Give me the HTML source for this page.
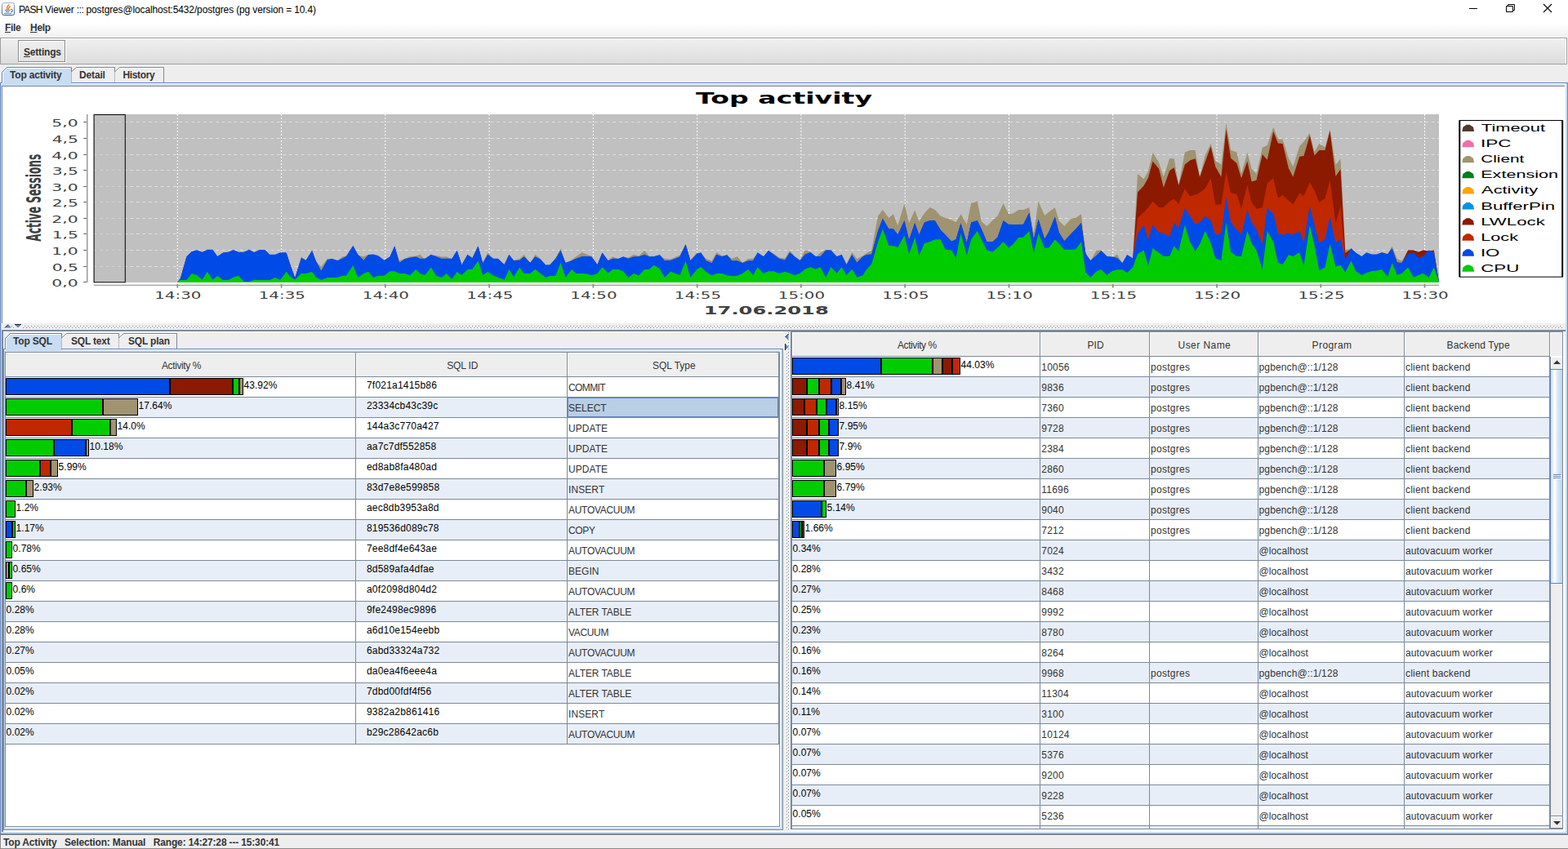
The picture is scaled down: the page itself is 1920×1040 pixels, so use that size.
<!DOCTYPE html><html lang="en"><head><meta charset="utf-8"><title>PASH Viewer</title><style>*{box-sizing:border-box;margin:0;padding:0}
html,body{width:1920px;height:1040px;overflow:hidden;background:#eee;font-family:"Liberation Sans",sans-serif;font-size:12px;color:#333}
body{position:relative}
div,span,i,svg{position:absolute;display:block}
span{white-space:nowrap;line-height:14px;height:14px}
u{text-decoration:underline;text-underline-offset:1px}
.b{font-weight:bold;color:#333}
.k{color:#000}
.c{color:#333}
.bar{height:21px;border:1px solid #000}
.th{background:#eee;color:#333;box-shadow:inset 1px 1px 0 #fff}
#chartwrap{left:3px;top:106px;width:1913px;height:290px;background:#fff;overflow:hidden}
#chartwrap svg{left:0;top:0}
.s{position:static;display:inline;line-height:inherit;height:auto}
</style></head><body>
<div style="left:0px;top:0px;width:1920px;height:23px;background:#fff"></div>
<svg style="left:2px;top:3px" width="16" height="16" viewBox="0 0 16 16"><defs><linearGradient id="jb" x1="0" y1="0" x2="0" y2="1"><stop offset="0" stop-color="#a3b4cd"/><stop offset="1" stop-color="#2f5a80"/></linearGradient></defs><rect x="0.5" y="0.5" width="15" height="15" rx="2" fill="#f7f7f7" stroke="url(#jb)"/><path d="M9.500 2.500C7 4.500 6 6 6.700 8.500M10.600 4.800C8.800 6 8 7.200 8.300 8.600" fill="none" stroke="#e8740c" stroke-width="1.300"/><path d="M4 9.500H10.500M5 11.500H9.500M11.300 8.300c2.500.3 2.800 3 0 3.600" fill="none" stroke="#4a6fa5" stroke-width="1.100"/><path d="M3 13.500H12" fill="none" stroke="#6f8db8" stroke-width="1"/></svg>
<span class="t0" style="left:23px;top:5px;letter-spacing:-0.14px;color:#000"><span class="s" style="letter-spacing:-0.75px">PASH</span> Viewer <span class="s" style="letter-spacing:-0.5px">:::</span> postgres@localhost:5432/postgres (pg version = 10.4)</span>
<svg style="left:1790px;top:0" width="130" height="23" viewBox="0 0 130 23"><path d="M9 10.500h10" stroke="#000" fill="none"/><path d="M54.500 7.500h8v7h-8zM56.500 7.500v-2h8v7h-2" stroke="#000" fill="none"/><path d="M100 5l10 10M110 5l-10 10" stroke="#000" fill="none" stroke-width="1.100"/></svg>
<div style="left:0px;top:23px;width:1920px;height:23px;background:linear-gradient(#fff 0%,#fff 25%,#f0f0f0 100%)"></div>
<span class="b" style="left:6px;top:27px;letter-spacing:-0.3px"><u>F</u>ile</span>
<span class="b" style="left:37px;top:27px;letter-spacing:-0.3px"><u>H</u>elp</span>
<div style="left:0px;top:46px;width:1919px;height:33px;background:linear-gradient(#f0f0f0,#dcdcdc);border:1px solid #a0a0a0;box-shadow:inset 0 1px 0 #fff, inset -1px 0 0 #fff"></div>
<div style="left:22px;top:49px;width:58px;height:27px;background:linear-gradient(#efefef,#e2e2e2);border:1px solid #8c8c8c;box-shadow:1px 1px 0 #fff, inset 1px 1px 0 #fff"></div>
<span class="b" style="left:29px;top:57px;letter-spacing:-0.19px"><u>S</u>ettings</span>
<div style="left:0px;top:101px;width:1920px;height:296px;background:#c8ddf2;border-left:1px solid #6382bf;border-top:1px solid #6382bf;border-right:1px solid #7a8a99"></div>
<div style="left:1px;top:102px;width:1916px;height:1px;background:#fff"></div>
<div style="left:1916px;top:102px;width:1px;height:294px;background:#fff"></div>
<div style="left:2px;top:105px;width:1914px;height:291px;background:#fff;border-left:1px solid #7a8a99;border-top:1px solid #7a8a99"></div>
<svg style="left:0px;top:80px" width="210" height="26" viewBox="0 80 210 26"><path d="M2.5 105V88.5L8.5 82.5H87.5V105z" fill="#c8ddf2"/><path d="M3.5 102V89L9 83.5H86.5" fill="none" stroke="#fff"/><path d="M2.5 101.5V88.5L8.5 82.5H87.5V101.5" fill="none" stroke="#6382bf"/><path d="M87.5 101V88L93.5 82.5H140.5V101z" fill="#eee"/><path d="M88.5 88.5L94 83.5H139.5" fill="none" stroke="#fff" stroke-opacity=".8"/><path d="M87.5 88L93.5 82.5H140.5V101" fill="none" stroke="#7a8a99"/><path d="M140.5 101V88L146.5 82.5H200.5V101z" fill="#eee"/><path d="M141.5 88.5L147 83.5H199.5" fill="none" stroke="#fff" stroke-opacity=".8"/><path d="M140.5 88L146.5 82.5H200.5V101" fill="none" stroke="#7a8a99"/></svg>
<span class="b" style="left:12px;top:85px;letter-spacing:-0.19px">Top activity</span>
<span class="b" style="left:97px;top:85px;letter-spacing:-0.15px">Detail</span>
<span class="b" style="left:150.4px;top:85px;letter-spacing:-0.33px">History</span>
<div id="chartwrap"><svg width="1913" height="290" viewBox="3 106 1913 290"><rect x="3" y="106" width="1913" height="290" fill="#fff"/><text transform="translate(852.09 126.75) scale(1.6593 1)" font-family="'DejaVu Sans', 'Liberation Sans', sans-serif" font-size="20" font-weight="bold" fill="#000">Top activity</text><rect x="114.6" y="140" width="1647.4" height="206" fill="#c0c0c0"/><path d="M217.3 140V346M344.6 140V346M471.8 140V346M599.1 140V346M726.4 140V346M853.7 140V346M980.9 140V346M1108.2 140V346M1235.5 140V346M1362.7 140V346M1490.0 140V346M1617.3 140V346M1744.5 140V346" stroke="#fff" stroke-width="1" stroke-dasharray="2 2" fill="none"/><path d="M114.6 326.5H1762M114.6 306.5H1762M114.6 286.5H1762M114.6 267.5H1762M114.6 247.5H1762M114.6 228.5H1762M114.6 208.5H1762M114.6 189.5H1762M114.6 169.5H1762M114.6 149.5H1762" stroke="#fff" stroke-opacity="0.5" stroke-width="1" stroke-dasharray="3.740 3.740" fill="none"/><path d="M217.3 346.0L217.3 345.4L220.8 341.9L228.5 313.8L234.8 308.8L241.2 307.1L247.6 309.6L253.8 306.7L260.4 306.7L266.3 314.9L273.3 310.1L279.3 309.6L285.8 307.0L292.1 309.6L298.4 309.6L305.0 306.7L311.2 309.9L317.5 306.9L324.5 306.9L330.2 312.7L337.1 312.7L343.0 310.1L350.6 310.1L355.8 325.9L361.2 340.9L369.0 314.6L374.6 319.6L382.1 307.6L386.7 320.1L393.3 326.7L400.8 317.1L406.2 317.7L413.3 319.9L418.3 315.0L424.2 312.9L432.3 301.7L438.3 312.7L445.4 314.2L451.0 311.7L457.1 312.4L463.3 314.2L470.4 319.6L477.5 315.1L483.2 302.1L489.0 319.2L495.8 316.7L501.7 314.2L509.2 313.8L514.2 311.8L520.4 317.7L527.9 312.7L534.2 312.9L540.8 314.6L546.7 314.2L553.3 317.7L559.6 307.6L565.4 325.1L572.5 312.7L578.5 315.0L585.4 302.1L591.2 321.7L597.3 309.2L604.2 317.7L610.0 317.7L617.5 323.3L623.3 312.7L629.2 318.8L636.2 317.1L641.7 312.1L649.2 322.6L655.4 311.8L661.7 316.7L668.3 325.5L673.3 325.2L680.4 315.8L686.5 304.2L692.5 322.7L700.0 318.3L705.4 314.2L712.7 309.2L719.2 312.1L724.3 313.8L731.5 323.8L737.5 310.1L744.6 318.8L750.4 314.2L757.5 317.7L763.3 315.1L769.3 315.4L776.2 311.8L782.1 313.8L789.2 306.8L795.0 313.8L800.8 313.8L807.9 313.0L813.8 316.7L821.2 317.5L826.7 315.0L832.5 312.5L839.6 298.8L845.4 318.8L853.3 309.6L858.3 310.1L864.6 317.1L871.7 319.6L877.3 309.2L884.2 313.3L890.2 313.0L896.2 316.7L902.9 314.2L909.2 321.7L916.2 317.1L922.1 316.7L927.7 310.2L935.0 313.8L941.0 307.6L947.5 310.8L954.2 315.4L961.2 316.5L967.1 306.9L973.3 314.0L979.6 318.6L985.8 306.5L992.5 308.6L998.8 314.9L1004.6 309.4L1011.2 306.1L1017.5 306.1L1024.6 314.9L1030.7 311.5L1036.5 323.6L1043.3 309.0L1049.3 316.9L1056.7 313.2L1060.0 310.8L1067.3 306.6L1075.1 264.4L1080.8 257.1L1088.3 267.0L1093.9 262.3L1099.4 276.4L1107.4 249.3L1113.1 273.2L1120.2 257.4L1125.4 271.2L1131.9 261.3L1138.6 254.0L1144.9 257.1L1151.7 264.4L1157.4 267.0L1165.2 269.6L1170.6 272.2L1176.5 262.3L1183.8 274.8L1189.2 249.1L1196.7 246.4L1201.7 271.2L1208.4 276.9L1215.4 270.1L1221.5 264.4L1228.5 249.3L1235.0 262.0L1240.0 261.8L1247.3 257.1L1253.0 257.1L1260.3 254.3L1265.8 286.3L1271.5 246.7L1279.1 264.1L1284.3 259.7L1291.8 254.3L1296.8 270.6L1303.3 276.9L1311.9 267.5L1317.1 267.0L1323.9 262.3L1329.4 309.7L1335.3 320.0L1342.6 306.6L1348.3 306.6L1355.4 313.4L1361.9 315.3L1368.1 311.8L1374.4 322.9L1380.1 312.9L1387.1 317.1L1393.0 213.0L1400.6 219.3L1406.0 209.9L1411.5 187.0L1419.1 199.0L1424.8 216.7L1432.1 194.3L1437.6 194.3L1443.3 226.6L1450.8 186.5L1457.1 183.9L1463.6 183.9L1469.1 216.7L1475.6 190.6L1482.6 176.0L1488.3 196.9L1495.4 201.6L1501.4 150.5L1507.1 183.9L1514.4 186.5L1520.0 212.5L1527.4 187.0L1532.6 206.8L1538.5 213.0L1545.8 180.7L1551.7 178.1L1559.2 155.7L1564.9 170.3L1570.6 170.8L1577.9 193.8L1583.4 204.2L1591.2 179.2L1596.5 173.4L1603.8 163.0L1609.5 185.9L1615.4 176.0L1622.5 180.2L1628.5 158.1L1635.5 202.1L1641.5 194.6L1647.3 306.1L1654.3 304.9L1660.5 310.6L1667.5 314.8L1673.2 310.1L1679.8 312.5L1685.5 312.5L1692.1 308.7L1699.1 310.8L1704.6 301.4L1710.8 317.0L1716.6 319.6L1724.1 306.6L1730.8 306.6L1737.1 308.7L1742.3 306.6L1749.6 307.5L1755.8 306.4L1761.9 345.4L1761.9 346.0Z" fill="#9f9371"/><path d="M217.3 346.0L217.3 345.4L220.8 341.9L228.5 315.2L234.8 308.8L241.2 307.1L247.6 309.6L253.8 306.7L260.4 306.7L266.3 314.9L273.3 310.1L279.3 309.6L285.8 307.0L292.1 309.6L298.4 309.6L305.0 306.7L311.2 309.9L317.5 306.9L324.5 306.9L330.2 312.7L337.1 312.7L343.0 310.1L350.6 310.1L355.8 325.9L361.2 340.9L369.0 316.7L374.6 319.6L382.1 307.6L386.7 320.1L393.3 332.6L400.8 319.2L406.2 317.7L413.3 319.9L418.3 318.0L424.2 314.6L432.3 301.7L438.3 312.7L445.4 319.6L451.0 313.0L457.1 312.4L463.3 314.2L470.4 319.6L477.5 315.1L483.2 302.1L489.0 322.6L495.8 318.0L501.7 316.7L509.2 315.1L514.2 317.6L520.4 317.7L527.9 312.7L534.2 315.1L540.8 317.6L546.7 317.6L553.3 317.7L559.6 307.6L565.4 325.1L572.5 312.7L578.5 317.1L585.4 302.1L591.2 323.0L597.3 312.7L604.2 317.7L610.0 317.7L617.5 325.1L623.3 312.7L629.2 320.1L636.2 319.6L641.7 315.1L649.2 322.6L655.4 315.1L661.7 318.4L668.3 325.5L673.3 325.2L680.4 317.6L686.5 307.6L692.5 322.7L700.0 320.1L705.4 317.6L712.7 314.9L719.2 314.9L724.3 315.1L731.5 325.1L737.5 310.1L744.6 320.1L750.4 317.7L757.5 317.7L763.3 315.1L769.3 317.7L776.2 315.1L782.1 315.1L789.2 312.7L795.0 315.1L800.8 315.1L807.9 313.0L813.8 320.1L821.2 319.6L826.7 317.6L832.5 315.1L839.6 300.1L845.4 320.1L853.3 311.7L858.3 310.1L864.6 320.1L871.7 323.0L877.3 312.7L884.2 315.1L890.2 313.0L896.2 320.1L902.9 320.1L909.2 323.0L916.2 320.1L922.1 320.1L927.7 310.2L935.0 315.1L941.0 307.6L947.5 312.6L954.2 317.6L961.2 319.5L967.1 309.9L973.3 315.3L979.6 319.9L985.8 312.4L992.5 309.9L998.8 314.9L1004.6 314.9L1011.2 307.4L1017.5 307.4L1024.6 314.9L1030.7 312.8L1036.5 324.9L1043.3 312.8L1049.3 322.4L1056.7 314.9L1060.0 313.2L1067.3 312.2L1075.1 283.5L1080.8 268.4L1088.3 280.9L1093.9 281.2L1099.4 288.2L1107.4 271.0L1113.1 294.5L1120.2 273.6L1125.4 288.2L1131.9 273.1L1138.6 271.0L1144.9 271.0L1151.7 282.5L1157.4 288.2L1165.2 296.5L1170.6 293.9L1176.5 273.9L1183.8 298.1L1189.2 273.1L1196.7 270.8L1201.7 280.9L1208.4 296.9L1215.4 296.9L1221.5 291.3L1228.5 271.0L1235.0 275.7L1240.0 276.0L1247.3 276.0L1253.0 275.7L1260.3 261.1L1265.8 293.9L1271.5 268.9L1279.1 293.4L1284.3 284.6L1291.8 266.3L1296.8 285.6L1303.3 296.0L1311.9 286.6L1317.1 281.4L1323.9 273.6L1329.4 311.6L1335.3 320.0L1342.6 313.7L1348.3 308.0L1355.4 314.8L1361.9 315.3L1368.1 316.9L1374.4 322.9L1380.1 312.9L1387.1 317.1L1393.0 235.4L1400.6 227.6L1406.0 217.7L1411.5 197.4L1419.1 206.8L1424.8 229.7L1432.1 208.9L1437.6 205.2L1443.3 227.1L1450.8 201.6L1457.1 196.4L1463.6 194.3L1469.1 216.7L1475.6 198.4L1482.6 179.2L1488.3 204.2L1495.4 216.7L1501.4 158.3L1507.1 193.8L1514.4 200.0L1520.0 218.2L1527.4 197.4L1532.6 222.4L1538.5 220.8L1545.8 189.1L1551.7 195.8L1559.2 160.9L1564.9 175.5L1570.6 176.0L1577.9 206.2L1583.4 216.7L1591.2 191.7L1596.5 191.1L1603.8 166.1L1609.5 190.6L1615.4 183.9L1622.5 183.9L1628.5 160.4L1635.5 216.1L1641.5 207.3L1647.3 309.7L1654.3 304.9L1660.5 310.6L1667.5 314.8L1673.2 310.1L1679.8 312.5L1685.5 312.5L1692.1 310.1L1699.1 312.2L1704.6 304.9L1710.8 321.2L1716.6 322.6L1724.1 306.6L1730.8 306.6L1737.1 308.7L1742.3 306.6L1749.6 307.5L1755.8 306.4L1761.9 345.4L1761.9 346.0Z" fill="#8b1a00"/><path d="M217.3 346.0L217.3 345.4L220.8 341.9L228.5 315.2L234.8 308.8L241.2 307.1L247.6 309.6L253.8 306.7L260.4 306.7L266.3 314.9L273.3 310.1L279.3 309.6L285.8 307.0L292.1 309.6L298.4 309.6L305.0 306.7L311.2 309.9L317.5 306.9L324.5 306.9L330.2 312.7L337.1 312.7L343.0 310.1L350.6 310.1L355.8 325.9L361.2 340.9L369.0 316.7L374.6 319.6L382.1 307.6L386.7 320.1L393.3 332.6L400.8 319.2L406.2 317.7L413.3 319.9L418.3 318.0L424.2 314.6L432.3 301.7L438.3 312.7L445.4 319.6L451.0 313.0L457.1 312.4L463.3 314.2L470.4 319.6L477.5 315.1L483.2 302.1L489.0 322.6L495.8 318.0L501.7 316.7L509.2 315.1L514.2 317.6L520.4 317.7L527.9 312.7L534.2 315.1L540.8 317.6L546.7 317.6L553.3 317.7L559.6 307.6L565.4 325.1L572.5 312.7L578.5 317.1L585.4 302.1L591.2 323.0L597.3 312.7L604.2 317.7L610.0 317.7L617.5 325.1L623.3 312.7L629.2 320.1L636.2 319.6L641.7 315.1L649.2 322.6L655.4 315.1L661.7 318.4L668.3 325.5L673.3 325.2L680.4 317.6L686.5 307.6L692.5 322.7L700.0 320.1L705.4 317.6L712.7 314.9L719.2 314.9L724.3 315.1L731.5 325.1L737.5 310.1L744.6 320.1L750.4 317.7L757.5 317.7L763.3 315.1L769.3 317.7L776.2 315.1L782.1 315.1L789.2 312.7L795.0 315.1L800.8 315.1L807.9 313.0L813.8 320.1L821.2 319.6L826.7 317.6L832.5 315.1L839.6 300.1L845.4 320.1L853.3 311.7L858.3 310.1L864.6 320.1L871.7 323.0L877.3 312.7L884.2 315.1L890.2 313.0L896.2 320.1L902.9 320.1L909.2 323.0L916.2 320.1L922.1 320.1L927.7 310.2L935.0 315.1L941.0 307.6L947.5 312.6L954.2 317.6L961.2 319.5L967.1 309.9L973.3 315.3L979.6 319.9L985.8 312.4L992.5 309.9L998.8 314.9L1004.6 314.9L1011.2 307.4L1017.5 307.4L1024.6 314.9L1030.7 312.8L1036.5 324.9L1043.3 312.8L1049.3 322.4L1056.7 314.9L1060.0 313.2L1067.3 312.2L1075.1 283.5L1080.8 268.4L1088.3 280.9L1093.9 281.2L1099.4 288.2L1107.4 271.0L1113.1 294.5L1120.2 273.6L1125.4 288.2L1131.9 273.1L1138.6 271.0L1144.9 271.0L1151.7 282.5L1157.4 288.2L1165.2 296.5L1170.6 293.9L1176.5 273.9L1183.8 298.1L1189.2 273.1L1196.7 270.8L1201.7 280.9L1208.4 296.9L1215.4 296.9L1221.5 291.3L1228.5 271.0L1235.0 275.7L1240.0 276.0L1247.3 276.0L1253.0 275.7L1260.3 261.1L1265.8 293.9L1271.5 268.9L1279.1 293.4L1284.3 284.6L1291.8 266.3L1296.8 285.6L1303.3 296.0L1311.9 286.6L1317.1 281.4L1323.9 273.6L1329.4 311.6L1335.3 320.0L1342.6 313.7L1348.3 308.0L1355.4 314.8L1361.9 315.3L1368.1 316.9L1374.4 322.9L1380.1 312.9L1387.1 317.1L1393.0 267.0L1400.6 259.9L1406.0 254.2L1411.5 246.7L1419.1 254.0L1424.8 254.0L1432.1 246.4L1437.6 243.8L1443.3 249.5L1450.8 231.2L1457.1 240.6L1463.6 238.5L1469.1 235.9L1475.6 230.7L1482.6 218.2L1488.3 250.5L1495.4 250.5L1501.4 210.4L1507.1 235.9L1514.4 238.0L1520.0 255.2L1527.4 226.6L1532.6 247.9L1538.5 255.7L1545.8 254.2L1551.7 224.5L1559.2 218.2L1564.9 242.7L1570.6 239.1L1577.9 245.8L1583.4 250.5L1591.2 236.5L1596.5 240.1L1603.8 223.4L1609.5 233.3L1615.4 247.9L1622.5 242.7L1628.5 220.8L1635.5 273.2L1641.5 251.9L1647.3 318.9L1654.3 304.9L1660.5 310.6L1667.5 314.8L1673.2 310.1L1679.8 312.5L1685.5 312.5L1692.1 310.1L1699.1 312.2L1704.6 304.9L1710.8 322.6L1716.6 322.6L1724.1 312.2L1730.8 310.1L1737.1 317.1L1742.3 314.8L1749.6 307.5L1755.8 309.6L1761.9 345.4L1761.9 346.0Z" fill="#c02800"/><path d="M217.3 346.0L217.3 345.0L220.8 341.0L228.5 314.3L234.8 307.9L241.2 306.2L247.6 308.8L253.8 305.8L260.4 305.8L266.3 314.0L273.3 309.2L279.3 308.8L285.8 306.1L292.1 308.8L298.4 308.8L305.0 305.8L311.2 309.0L317.5 306.0L324.5 306.0L330.2 311.8L337.1 311.8L343.0 309.2L350.6 309.2L355.8 325.0L361.2 340.0L369.0 315.8L374.6 318.8L382.1 306.7L386.7 319.2L393.3 331.7L400.8 318.3L406.2 316.8L413.3 319.0L418.3 317.1L424.2 313.8L432.3 300.8L438.3 311.8L445.4 318.8L451.0 312.1L457.1 311.5L463.3 313.3L470.4 318.8L477.5 314.2L483.2 301.2L489.0 321.7L495.8 317.1L501.7 315.8L509.2 314.2L514.2 316.7L520.4 316.8L527.9 311.8L534.2 314.2L540.8 316.7L546.7 316.7L553.3 316.8L559.6 306.7L565.4 324.2L572.5 311.8L578.5 316.2L585.4 301.2L591.2 322.1L597.3 311.8L604.2 316.8L610.0 316.8L617.5 324.2L623.3 311.8L629.2 319.2L636.2 318.8L641.7 314.2L649.2 321.7L655.4 314.2L661.7 317.5L668.3 324.6L673.3 324.3L680.4 316.7L686.5 306.7L692.5 321.8L700.0 319.2L705.4 316.7L712.7 314.0L719.2 314.0L724.3 314.2L731.5 324.2L737.5 309.2L744.6 319.2L750.4 316.8L757.5 316.8L763.3 314.2L769.3 316.8L776.2 314.2L782.1 314.2L789.2 311.8L795.0 314.2L800.8 314.2L807.9 312.1L813.8 319.2L821.2 318.8L826.7 316.7L832.5 314.2L839.6 299.2L845.4 319.2L853.3 310.8L858.3 309.2L864.6 319.2L871.7 322.1L877.3 311.8L884.2 314.2L890.2 312.1L896.2 319.2L902.9 319.2L909.2 322.1L916.2 319.2L922.1 319.2L927.7 309.3L935.0 314.2L941.0 306.7L947.5 311.7L954.2 316.7L961.2 318.6L967.1 309.0L973.3 314.4L979.6 319.0L985.8 311.5L992.5 309.0L998.8 314.0L1004.6 314.0L1011.2 306.5L1017.5 306.5L1024.6 314.0L1030.7 311.9L1036.5 324.0L1043.3 311.9L1049.3 321.5L1056.7 314.0L1060.0 312.3L1067.3 311.3L1075.1 282.6L1080.8 267.5L1088.3 280.0L1093.9 280.3L1099.4 287.3L1107.4 270.1L1113.1 293.6L1120.2 272.7L1125.4 287.3L1131.9 272.2L1138.6 270.1L1144.9 270.1L1151.7 281.6L1157.4 287.3L1165.2 295.6L1170.6 293.0L1176.5 273.0L1183.8 297.2L1189.2 272.2L1196.7 269.9L1201.7 280.0L1208.4 296.0L1215.4 296.0L1221.5 290.4L1228.5 270.1L1235.0 274.8L1240.0 275.1L1247.3 275.1L1253.0 274.8L1260.3 260.2L1265.8 293.0L1271.5 268.0L1279.1 292.5L1284.3 283.7L1291.8 265.4L1296.8 284.7L1303.3 295.1L1311.9 285.8L1317.1 280.5L1323.9 272.7L1329.4 310.8L1335.3 319.1L1342.6 312.8L1348.3 307.1L1355.4 313.9L1361.9 314.4L1368.1 316.0L1374.4 322.0L1380.1 312.0L1387.1 316.2L1393.0 286.8L1400.6 275.3L1406.0 294.1L1411.5 275.3L1419.1 284.7L1424.8 285.8L1432.1 289.9L1437.6 272.7L1443.3 279.0L1450.8 254.7L1457.1 264.4L1463.6 274.5L1469.1 272.2L1475.6 265.1L1482.6 270.1L1488.3 287.8L1495.4 285.8L1501.4 242.0L1507.1 272.2L1514.4 281.6L1520.0 287.3L1527.4 257.1L1532.6 272.2L1538.5 281.1L1545.8 299.3L1551.7 254.7L1559.2 261.8L1564.9 285.2L1570.6 287.8L1577.9 285.8L1583.4 287.8L1591.2 283.1L1596.5 297.2L1603.8 252.4L1609.5 275.3L1615.4 297.7L1622.5 293.0L1628.5 265.4L1635.5 297.2L1641.5 293.6L1647.3 318.0L1654.3 304.0L1660.5 309.7L1667.5 313.9L1673.2 309.2L1679.8 311.6L1685.5 311.6L1692.1 309.2L1699.1 311.3L1704.6 304.0L1710.8 321.7L1716.6 321.7L1724.1 311.3L1730.8 309.2L1737.1 316.2L1742.3 313.9L1749.6 306.6L1755.8 308.7L1761.9 344.6L1761.9 346.0Z" fill="#004ae7"/><path d="M217.3 346.0L217.3 345.0L220.8 342.9L228.5 342.9L234.8 335.0L241.2 337.3L247.6 342.7L253.8 332.9L260.4 342.5L266.3 337.9L273.3 342.9L279.3 342.9L285.8 339.8L292.1 337.8L298.4 345.0L305.0 345.0L311.2 342.9L317.5 342.9L324.5 342.9L330.2 342.9L337.1 340.0L343.0 342.9L350.6 332.9L355.8 339.2L361.2 342.5L369.0 335.0L374.6 335.0L382.1 332.9L386.7 339.2L393.3 342.9L400.8 340.0L406.2 340.0L413.3 340.0L418.3 337.9L424.2 337.5L432.3 325.0L438.3 340.0L445.4 335.0L451.0 332.7L457.1 340.0L463.3 337.7L470.4 337.7L477.5 332.3L483.2 332.3L489.0 335.0L495.8 335.0L501.7 337.5L509.2 330.0L514.2 335.0L520.4 337.1L527.9 327.5L534.2 337.9L540.8 340.0L546.7 335.0L553.3 342.1L559.6 332.9L565.4 337.1L572.5 330.2L578.5 329.8L585.4 319.6L591.2 337.1L597.3 332.9L604.2 337.5L610.0 340.0L617.5 342.7L623.3 330.0L629.2 339.2L636.2 327.5L641.7 335.0L649.2 335.0L655.4 330.0L661.7 335.0L668.3 340.0L673.3 337.9L680.4 337.7L686.5 322.1L692.5 340.0L700.0 330.0L705.4 335.0L712.7 335.0L719.2 335.4L724.3 337.5L731.5 335.0L737.5 327.3L744.6 334.6L750.4 330.0L757.5 330.0L763.3 332.5L769.3 340.0L776.2 335.0L782.1 337.5L789.2 330.0L795.0 330.0L800.8 324.8L807.9 329.2L813.8 340.0L821.2 332.5L826.7 335.0L832.5 337.1L839.6 319.8L845.4 340.0L853.3 330.0L858.3 327.1L864.6 332.9L871.7 337.5L877.3 335.0L884.2 335.0L890.2 337.5L896.2 337.9L902.9 337.7L909.2 335.0L916.2 330.0L922.1 337.1L927.7 327.5L935.0 335.0L941.0 332.3L947.5 332.3L954.2 335.0L961.2 332.8L967.1 334.8L973.3 337.3L979.6 334.8L985.8 329.8L992.5 327.3L998.8 329.8L1004.6 327.3L1011.2 339.8L1017.5 327.3L1024.6 334.4L1030.7 327.3L1036.5 336.9L1043.3 329.8L1049.3 339.8L1056.7 337.3L1060.0 331.6L1067.3 323.2L1075.1 296.2L1080.8 280.5L1088.3 300.9L1093.9 301.2L1099.4 302.9L1107.4 288.4L1113.1 311.3L1120.2 291.0L1125.4 312.8L1131.9 298.2L1138.6 296.2L1144.9 293.2L1151.7 293.2L1157.4 305.8L1165.2 306.4L1170.6 316.0L1176.5 285.8L1183.8 312.8L1189.2 293.2L1196.7 283.1L1201.7 293.6L1208.4 306.6L1215.4 308.7L1221.5 303.5L1228.5 296.0L1235.0 303.5L1240.0 299.8L1247.3 291.0L1253.0 290.8L1260.3 283.1L1265.8 309.7L1271.5 285.8L1279.1 304.0L1284.3 303.5L1291.8 293.6L1296.8 298.8L1303.3 305.8L1311.9 305.8L1317.1 305.5L1323.9 296.2L1329.4 333.7L1335.3 339.7L1342.6 332.6L1348.3 330.0L1355.4 337.0L1361.9 332.1L1368.1 330.3L1374.4 330.3L1380.1 334.2L1387.1 327.4L1393.0 311.3L1400.6 306.6L1406.0 325.3L1411.5 304.0L1419.1 309.7L1424.8 313.9L1432.1 313.9L1437.6 301.4L1443.3 307.6L1450.8 275.5L1457.1 296.2L1463.6 307.8L1469.1 299.3L1475.6 283.1L1482.6 297.7L1488.3 316.5L1495.4 318.9L1501.4 272.7L1507.1 308.7L1514.4 313.9L1520.0 313.9L1527.4 283.1L1532.6 298.2L1538.5 306.6L1545.8 330.0L1551.7 283.1L1559.2 296.2L1564.9 321.7L1570.6 324.1L1577.9 312.3L1583.4 313.9L1591.2 309.2L1596.5 325.3L1603.8 275.9L1609.5 300.3L1615.4 331.6L1622.5 327.4L1628.5 298.8L1635.5 326.4L1641.5 324.8L1647.3 333.7L1654.3 319.6L1660.5 332.6L1667.5 337.0L1673.2 334.2L1679.8 332.1L1685.5 331.8L1692.1 330.0L1699.1 338.9L1704.6 322.2L1710.8 337.0L1716.6 334.7L1724.1 327.4L1730.8 339.7L1737.1 337.0L1742.3 334.7L1749.6 339.7L1755.8 327.4L1761.9 344.6L1761.9 346.0Z" fill="#00cc00"/><rect x="115.100" y="140.500" width="38.200" height="205.300" fill="#c0c0c0" fill-opacity="0.5" stroke="#000" stroke-width="1"/><path d="M106.800 140V346" stroke="#8c8c8c" stroke-width="1.3" fill="none"/><path d="M102.200 345.5H106M102.200 326.5H106M102.200 306.5H106M102.200 286.5H106M102.200 267.5H106M102.200 247.5H106M102.200 228.5H106M102.200 208.5H106M102.200 189.5H106M102.200 169.5H106M102.200 149.5H106" stroke="#666" stroke-width="1" fill="none"/><path d="M114.6 349.300H1762" stroke="#868686" stroke-width="1" fill="none"/><path d="M217.3 348.300V352.500M344.6 348.300V352.500M471.8 348.300V352.500M599.1 348.300V352.500M726.4 348.300V352.500M853.7 348.300V352.500M980.9 348.300V352.500M1108.2 348.300V352.500M1235.5 348.300V352.500M1362.7 348.300V352.500M1490.0 348.300V352.500M1617.3 348.300V352.500M1744.5 348.300V352.500" stroke="#868686" stroke-width="1.7" fill="none"/><text transform="translate(63.21 350.90) scale(1.6978 1)" font-family="'DejaVu Sans', 'Liberation Sans', sans-serif" font-size="12" font-weight="normal" fill="#404040">0,0</text><text transform="translate(63.64 331.90) scale(1.6978 1)" font-family="'DejaVu Sans', 'Liberation Sans', sans-serif" font-size="12" font-weight="normal" fill="#404040">0,5</text><text transform="translate(63.21 311.90) scale(1.6978 1)" font-family="'DejaVu Sans', 'Liberation Sans', sans-serif" font-size="12" font-weight="normal" fill="#404040">1,0</text><text transform="translate(63.64 291.90) scale(1.6978 1)" font-family="'DejaVu Sans', 'Liberation Sans', sans-serif" font-size="12" font-weight="normal" fill="#404040">1,5</text><text transform="translate(63.21 272.90) scale(1.6978 1)" font-family="'DejaVu Sans', 'Liberation Sans', sans-serif" font-size="12" font-weight="normal" fill="#404040">2,0</text><text transform="translate(63.64 252.90) scale(1.6978 1)" font-family="'DejaVu Sans', 'Liberation Sans', sans-serif" font-size="12" font-weight="normal" fill="#404040">2,5</text><text transform="translate(63.21 233.90) scale(1.6978 1)" font-family="'DejaVu Sans', 'Liberation Sans', sans-serif" font-size="12" font-weight="normal" fill="#404040">3,0</text><text transform="translate(63.64 213.90) scale(1.6978 1)" font-family="'DejaVu Sans', 'Liberation Sans', sans-serif" font-size="12" font-weight="normal" fill="#404040">3,5</text><text transform="translate(63.21 194.90) scale(1.6978 1)" font-family="'DejaVu Sans', 'Liberation Sans', sans-serif" font-size="12" font-weight="normal" fill="#404040">4,0</text><text transform="translate(63.64 174.90) scale(1.6978 1)" font-family="'DejaVu Sans', 'Liberation Sans', sans-serif" font-size="12" font-weight="normal" fill="#404040">4,5</text><text transform="translate(63.21 154.90) scale(1.6978 1)" font-family="'DejaVu Sans', 'Liberation Sans', sans-serif" font-size="12" font-weight="normal" fill="#404040">5,0</text><text transform="translate(189.22 366.00) scale(1.6556 1)" font-family="'DejaVu Sans', 'Liberation Sans', sans-serif" font-size="12" font-weight="normal" fill="#404040">14:30</text><text transform="translate(316.70 366.00) scale(1.6556 1)" font-family="'DejaVu Sans', 'Liberation Sans', sans-serif" font-size="12" font-weight="normal" fill="#404040">14:35</text><text transform="translate(443.76 366.00) scale(1.6556 1)" font-family="'DejaVu Sans', 'Liberation Sans', sans-serif" font-size="12" font-weight="normal" fill="#404040">14:40</text><text transform="translate(571.24 366.00) scale(1.6556 1)" font-family="'DejaVu Sans', 'Liberation Sans', sans-serif" font-size="12" font-weight="normal" fill="#404040">14:45</text><text transform="translate(698.30 366.00) scale(1.6556 1)" font-family="'DejaVu Sans', 'Liberation Sans', sans-serif" font-size="12" font-weight="normal" fill="#404040">14:50</text><text transform="translate(825.78 366.00) scale(1.6556 1)" font-family="'DejaVu Sans', 'Liberation Sans', sans-serif" font-size="12" font-weight="normal" fill="#404040">14:55</text><text transform="translate(952.84 366.00) scale(1.6556 1)" font-family="'DejaVu Sans', 'Liberation Sans', sans-serif" font-size="12" font-weight="normal" fill="#404040">15:00</text><text transform="translate(1080.32 366.00) scale(1.6556 1)" font-family="'DejaVu Sans', 'Liberation Sans', sans-serif" font-size="12" font-weight="normal" fill="#404040">15:05</text><text transform="translate(1207.38 366.00) scale(1.6556 1)" font-family="'DejaVu Sans', 'Liberation Sans', sans-serif" font-size="12" font-weight="normal" fill="#404040">15:10</text><text transform="translate(1334.86 366.00) scale(1.6556 1)" font-family="'DejaVu Sans', 'Liberation Sans', sans-serif" font-size="12" font-weight="normal" fill="#404040">15:15</text><text transform="translate(1461.92 366.00) scale(1.6556 1)" font-family="'DejaVu Sans', 'Liberation Sans', sans-serif" font-size="12" font-weight="normal" fill="#404040">15:20</text><text transform="translate(1589.40 366.00) scale(1.6556 1)" font-family="'DejaVu Sans', 'Liberation Sans', sans-serif" font-size="12" font-weight="normal" fill="#404040">15:25</text><text transform="translate(1716.46 366.00) scale(1.6556 1)" font-family="'DejaVu Sans', 'Liberation Sans', sans-serif" font-size="12" font-weight="normal" fill="#404040">15:30</text><text transform="translate(861.79 384.90) scale(1.7279 1)" font-family="'DejaVu Sans', 'Liberation Sans', sans-serif" font-size="14" font-weight="bold" fill="#404040">17.06.2018</text><text transform="translate(50.00 295.71) rotate(-90) scale(0.8687 1.8259)" font-family="'DejaVu Sans', 'Liberation Sans', sans-serif" font-size="14" font-weight="bold" fill="#404040">Active Sessions</text><rect x="1787.300" y="147.500" width="125.900" height="191.700" fill="#fff" stroke="#000" stroke-width="1"/><path d="M1787.300 147.500V339.200M1913.200 147.500V339.200" stroke="#000" stroke-width="1.9" fill="none"/><path d="M1790.300 161.1l1.100-5.300l4.400-3.100h3.800l4.400 3.100l1.100 5.300z" fill="#54382d"/><text transform="translate(1813.84 161.10) scale(1.8235 1)" font-family="'Liberation Sans', sans-serif" font-size="12" font-weight="normal" fill="#000">Timeout</text><path d="M1790.300 180.2l1.100-5.300l4.400-3.100h3.800l4.400 3.100l1.100 5.300z" fill="#f06eaa"/><text transform="translate(1812.89 180.18) scale(1.8776 1)" font-family="'Liberation Sans', sans-serif" font-size="12" font-weight="normal" fill="#000">IPC</text><path d="M1790.300 199.3l1.100-5.300l4.400-3.100h3.800l4.400 3.100l1.100 5.300z" fill="#9f9371"/><text transform="translate(1813.22 199.26) scale(1.7333 1)" font-family="'Liberation Sans', sans-serif" font-size="12" font-weight="normal" fill="#000">Client</text><path d="M1790.300 218.3l1.100-5.300l4.400-3.100h3.800l4.400 3.100l1.100 5.300z" fill="#007d1c"/><text transform="translate(1813.20 218.34) scale(1.8005 1)" font-family="'Liberation Sans', sans-serif" font-size="12" font-weight="normal" fill="#000">Extension</text><path d="M1790.300 237.4l1.100-5.300l4.400-3.100h3.800l4.400 3.100l1.100 5.300z" fill="#ffa500"/><text transform="translate(1814.07 237.42) scale(1.8191 1)" font-family="'Liberation Sans', sans-serif" font-size="12" font-weight="normal" fill="#000">Activity</text><path d="M1790.300 256.5l1.100-5.300l4.400-3.100h3.800l4.400 3.100l1.100 5.300z" fill="#0094e7"/><text transform="translate(1813.15 256.50) scale(1.8512 1)" font-family="'Liberation Sans', sans-serif" font-size="12" font-weight="normal" fill="#000">BufferPin</text><path d="M1790.300 275.6l1.100-5.300l4.400-3.100h3.800l4.400 3.100l1.100 5.300z" fill="#8b1a00"/><text transform="translate(1813.15 275.58) scale(1.8530 1)" font-family="'Liberation Sans', sans-serif" font-size="12" font-weight="normal" fill="#000">LWLock</text><path d="M1790.300 294.7l1.100-5.300l4.400-3.100h3.800l4.400 3.100l1.100 5.300z" fill="#c02800"/><text transform="translate(1813.19 294.66) scale(1.8092 1)" font-family="'Liberation Sans', sans-serif" font-size="12" font-weight="normal" fill="#000">Lock</text><path d="M1790.300 313.7l1.100-5.300l4.400-3.100h3.800l4.400 3.100l1.100 5.300z" fill="#004ae7"/><text transform="translate(1812.92 313.74) scale(1.8455 1)" font-family="'Liberation Sans', sans-serif" font-size="12" font-weight="normal" fill="#000">IO</text><path d="M1790.300 332.8l1.100-5.300l4.400-3.100h3.800l4.400 3.100l1.100 5.300z" fill="#00cc00"/><text transform="translate(1813.14 332.82) scale(1.8611 1)" font-family="'Liberation Sans', sans-serif" font-size="12" font-weight="normal" fill="#000">CPU</text></svg></div>
<div style="left:1px;top:396px;width:1916px;height:8px;background:#eee"></div>
<svg style="left:0;top:396px" width="1917" height="8" viewBox="0 396 1917 8"><defs><pattern id="dots" x="0" y="399" width="4" height="4" patternUnits="userSpaceOnUse"><rect x="1" y="0" width="1" height="1" fill="#fff"/><rect x="2" y="0" width="1" height="1" fill="#7a8a99"/><rect x="3" y="2" width="1" height="1" fill="#fff"/><rect x="0" y="2" width="1" height="1" fill="#7a8a99"/></pattern></defs><rect x="14" y="399" width="1900" height="4" fill="url(#dots)"/><rect x="15" y="398" width="12" height="5" fill="#eee"/><rect x="14" y="399" width="1" height="1" fill="#7a8a99"/><rect x="16" y="401" width="1" height="1" fill="#7a8a99"/><rect x="28" y="401" width="1" height="1" fill="#7a8a99"/><path d="M6 401.500L10 397.500L14 401.500z" fill="#6382bf"/><path d="M6 401.500L10 397.500" stroke="#222" fill="none"/><path d="M18 397.500h8l-4 4z" fill="#6382bf"/><path d="M18 397.500h8" stroke="#222" fill="none"/></svg>
<div style="left:2px;top:404px;width:1915px;height:615px;background:#fff;border-top:2px solid #7a8a99;border-left:2px solid #7a8a99"></div>
<div style="left:4px;top:406px;width:955px;height:611px;background:#eee"></div>
<div style="left:2px;top:1016px;width:957px;height:1px;background:#7a8a99"></div>
<div style="left:4px;top:406px;width:955px;height:1px;background:#fff"></div>
<svg style="left:4px;top:406px" width="220" height="26" viewBox="4 406 220 26"><path d="M6.5 431V414.5L12.5 408.5H75.5V431z" fill="#c8ddf2"/><path d="M7.5 428V415L13 409.5H74.5" fill="none" stroke="#fff"/><path d="M6.5 427.5V414.5L12.5 408.5H75.5V427.5" fill="none" stroke="#6382bf"/><path d="M75.5 427V414L81.5 408.5H145.5V427z" fill="#eee"/><path d="M76.5 414.5L82 409.5H144.5" fill="none" stroke="#fff" stroke-opacity=".8"/><path d="M75.5 414L81.5 408.5H145.5V427" fill="none" stroke="#7a8a99"/><path d="M145.5 427V414L151.5 408.5H216.5V427z" fill="#eee"/><path d="M146.5 414.5L152 409.5H215.5" fill="none" stroke="#fff" stroke-opacity=".8"/><path d="M145.5 414L151.5 408.5H216.5V427" fill="none" stroke="#7a8a99"/></svg>
<div style="left:4px;top:427px;width:955px;height:590px;background:#c8ddf2;border-left:1px solid #6382bf;border-top:1px solid #6382bf;border-right:1px solid #7a8a99;border-bottom:1px solid #7a8a99"></div>
<div style="left:7px;top:428px;width:68px;height:1px;background:#c8ddf2"></div>
<div style="left:7px;top:427px;width:68px;height:1px;background:#c8ddf2"></div>
<div style="left:5px;top:428px;width:2px;height:1px;background:#fff"></div>
<div style="left:76px;top:428px;width:880px;height:1px;background:#fff"></div>
<div style="left:6px;top:431px;width:949px;height:582px;background:#fff;border:1px solid #7a8a99"></div>
<div style="left:955px;top:428px;width:1px;height:586px;background:#fff"></div>
<div style="left:7px;top:1013px;width:949px;height:1px;background:#fff"></div>
<span class="b" style="left:16px;top:411px;letter-spacing:-0.19px">Top SQL</span>
<span class="b" style="left:87px;top:411px;letter-spacing:-0.19px">SQL text</span>
<span class="b" style="left:157px;top:411px;letter-spacing:-0.19px">SQL plan</span>
<div class="th" style="left:7px;top:432px;width:428px;height:29px"></div>
<div class="th" style="left:436px;top:432px;width:258px;height:29px"></div>
<div class="th" style="left:695px;top:432px;width:258px;height:29px"></div>
<div style="left:7px;top:461px;width:947px;height:1px;background:#7a8a99"></div>
<span class="c" style="left:197.98px;top:441px;letter-spacing:-0.389px">Activity %</span>
<span class="c" style="left:547.17px;top:441px;letter-spacing:-0.11px">SQL ID</span>
<span class="c" style="left:799.07px;top:441px;letter-spacing:-0.014px">SQL Type</span>
<i class="bar" style="left:7px;top:463px;width:201px;background:#004ae7"></i>
<i class="bar" style="left:208px;top:463px;width:77px;background:#8b1a00"></i>
<i class="bar" style="left:285px;top:463px;width:8px;background:#00cc00"></i>
<i class="bar" style="left:293px;top:463px;width:5px;background:#9f9371"></i>
<span class="k" style="left:298.6px;top:465px;letter-spacing:0.03px">43.92%</span>
<span class="k" style="left:449px;top:465px;letter-spacing:0.2px">7f021a1415b86</span>
<span class="c" style="left:696px;top:468px;letter-spacing:-0.61px">COMMIT</span>
<div style="left:7px;top:486px;width:947px;height:1px;background:#7a8a99"></div>
<div style="left:7px;top:487px;width:947px;height:24px;background:#e8eef7"></div>
<i class="bar" style="left:7px;top:488px;width:119px;background:#00cc00"></i>
<i class="bar" style="left:126px;top:488px;width:43px;background:#9f9371"></i>
<span class="k" style="left:169.6px;top:490px;letter-spacing:0.03px">17.64%</span>
<span class="k" style="left:449px;top:490px;letter-spacing:0.2px">23334cb43c39c</span>
<div style="left:695px;top:487px;width:258px;height:24px;background:#b8cfe5;border:1px solid #6382bf"></div>
<span class="c" style="left:696px;top:493px;letter-spacing:-0.01px">SELECT</span>
<div style="left:7px;top:511px;width:947px;height:1px;background:#7a8a99"></div>
<i class="bar" style="left:7px;top:513px;width:81px;background:#c02800"></i>
<i class="bar" style="left:88px;top:513px;width:47px;background:#00cc00"></i>
<i class="bar" style="left:135px;top:513px;width:8px;background:#9f9371"></i>
<span class="k" style="left:143.6px;top:515px;letter-spacing:0.03px">14.0%</span>
<span class="k" style="left:449px;top:515px;letter-spacing:0.2px">144a3c770a427</span>
<span class="c" style="left:696px;top:518px;letter-spacing:0.065px">UPDATE</span>
<div style="left:7px;top:536px;width:947px;height:1px;background:#7a8a99"></div>
<div style="left:7px;top:537px;width:947px;height:24px;background:#e8eef7"></div>
<i class="bar" style="left:7px;top:538px;width:59px;background:#00cc00"></i>
<i class="bar" style="left:66px;top:538px;width:39px;background:#004ae7"></i>
<i class="bar" style="left:105px;top:538px;width:4px;background:#9f9371"></i>
<span class="k" style="left:109.6px;top:540px;letter-spacing:0.03px">10.18%</span>
<span class="k" style="left:449px;top:540px;letter-spacing:0.2px">aa7c7df552858</span>
<span class="c" style="left:696px;top:543px;letter-spacing:0.065px">UPDATE</span>
<div style="left:7px;top:561px;width:947px;height:1px;background:#7a8a99"></div>
<i class="bar" style="left:7px;top:563px;width:42px;background:#00cc00"></i>
<i class="bar" style="left:49px;top:563px;width:13px;background:#c02800"></i>
<i class="bar" style="left:62px;top:563px;width:9px;background:#9f9371"></i>
<span class="k" style="left:71.6px;top:565px;letter-spacing:0.03px">5.99%</span>
<span class="k" style="left:449px;top:565px;letter-spacing:0.2px">ed8ab8fa480ad</span>
<span class="c" style="left:696px;top:568px;letter-spacing:0.065px">UPDATE</span>
<div style="left:7px;top:586px;width:947px;height:1px;background:#7a8a99"></div>
<div style="left:7px;top:587px;width:947px;height:24px;background:#e8eef7"></div>
<i class="bar" style="left:7px;top:588px;width:25px;background:#00cc00"></i>
<i class="bar" style="left:32px;top:588px;width:9px;background:#9f9371"></i>
<span class="k" style="left:41.6px;top:590px;letter-spacing:0.03px">2.93%</span>
<span class="k" style="left:449px;top:590px;letter-spacing:0.2px">83d7e8e599858</span>
<span class="c" style="left:696px;top:593px;letter-spacing:0.085px">INSERT</span>
<div style="left:7px;top:611px;width:947px;height:1px;background:#7a8a99"></div>
<i class="bar" style="left:7px;top:613px;width:12px;background:#00cc00"></i>
<span class="k" style="left:19.6px;top:615px;letter-spacing:0.03px">1.2%</span>
<span class="k" style="left:449px;top:615px;letter-spacing:0.2px">aec8db3953a8d</span>
<span class="c" style="left:696px;top:618px;letter-spacing:-0.292px">AUTOVACUUM</span>
<div style="left:7px;top:636px;width:947px;height:1px;background:#7a8a99"></div>
<div style="left:7px;top:637px;width:947px;height:24px;background:#e8eef7"></div>
<i class="bar" style="left:7px;top:638px;width:8px;background:#004ae7"></i>
<i class="bar" style="left:15px;top:638px;width:4px;background:#00cc00"></i>
<span class="k" style="left:19.6px;top:640px;letter-spacing:0.03px">1.17%</span>
<span class="k" style="left:449px;top:640px;letter-spacing:0.2px">819536d089c78</span>
<span class="c" style="left:696px;top:643px;letter-spacing:-0.367px">COPY</span>
<div style="left:7px;top:661px;width:947px;height:1px;background:#7a8a99"></div>
<i class="bar" style="left:7px;top:663px;width:8px;background:#00cc00"></i>
<span class="k" style="left:15.6px;top:665px;letter-spacing:0.03px">0.78%</span>
<span class="k" style="left:449px;top:665px;letter-spacing:0.2px">7ee8df4e643ae</span>
<span class="c" style="left:696px;top:668px;letter-spacing:-0.292px">AUTOVACUUM</span>
<div style="left:7px;top:686px;width:947px;height:1px;background:#7a8a99"></div>
<div style="left:7px;top:687px;width:947px;height:24px;background:#e8eef7"></div>
<i class="bar" style="left:7px;top:688px;width:4px;background:#9f9371"></i>
<i class="bar" style="left:11px;top:688px;width:4px;background:#00cc00"></i>
<span class="k" style="left:15.6px;top:690px;letter-spacing:0.03px">0.65%</span>
<span class="k" style="left:449px;top:690px;letter-spacing:0.2px">8d589afa4dfae</span>
<span class="c" style="left:696px;top:693px;letter-spacing:0.031px">BEGIN</span>
<div style="left:7px;top:711px;width:947px;height:1px;background:#7a8a99"></div>
<i class="bar" style="left:7px;top:713px;width:8px;background:#00cc00"></i>
<span class="k" style="left:15.6px;top:715px;letter-spacing:0.03px">0.6%</span>
<span class="k" style="left:449px;top:715px;letter-spacing:0.2px">a0f2098d804d2</span>
<span class="c" style="left:696px;top:718px;letter-spacing:-0.292px">AUTOVACUUM</span>
<div style="left:7px;top:736px;width:947px;height:1px;background:#7a8a99"></div>
<div style="left:7px;top:737px;width:947px;height:24px;background:#e8eef7"></div>
<span class="k" style="left:7.6px;top:740px;letter-spacing:0.03px">0.28%</span>
<span class="k" style="left:449px;top:740px;letter-spacing:0.2px">9fe2498ec9896</span>
<span class="c" style="left:696px;top:743px;letter-spacing:-0.078px">ALTER TABLE</span>
<div style="left:7px;top:761px;width:947px;height:1px;background:#7a8a99"></div>
<span class="k" style="left:7.6px;top:765px;letter-spacing:0.03px">0.28%</span>
<span class="k" style="left:449px;top:765px;letter-spacing:0.2px">a6d10e154eebb</span>
<span class="c" style="left:696px;top:768px;letter-spacing:-0.34px">VACUUM</span>
<div style="left:7px;top:786px;width:947px;height:1px;background:#7a8a99"></div>
<div style="left:7px;top:787px;width:947px;height:24px;background:#e8eef7"></div>
<span class="k" style="left:7.6px;top:790px;letter-spacing:0.03px">0.27%</span>
<span class="k" style="left:449px;top:790px;letter-spacing:0.2px">6abd33324a732</span>
<span class="c" style="left:696px;top:793px;letter-spacing:-0.292px">AUTOVACUUM</span>
<div style="left:7px;top:811px;width:947px;height:1px;background:#7a8a99"></div>
<span class="k" style="left:7.6px;top:815px;letter-spacing:0.03px">0.05%</span>
<span class="k" style="left:449px;top:815px;letter-spacing:0.2px">da0ea4f6eee4a</span>
<span class="c" style="left:696px;top:818px;letter-spacing:-0.078px">ALTER TABLE</span>
<div style="left:7px;top:836px;width:947px;height:1px;background:#7a8a99"></div>
<div style="left:7px;top:837px;width:947px;height:24px;background:#e8eef7"></div>
<span class="k" style="left:7.6px;top:840px;letter-spacing:0.03px">0.02%</span>
<span class="k" style="left:449px;top:840px;letter-spacing:0.2px">7dbd00fdf4f56</span>
<span class="c" style="left:696px;top:843px;letter-spacing:-0.078px">ALTER TABLE</span>
<div style="left:7px;top:861px;width:947px;height:1px;background:#7a8a99"></div>
<span class="k" style="left:7.6px;top:865px;letter-spacing:0.03px">0.02%</span>
<span class="k" style="left:449px;top:865px;letter-spacing:0.2px">9382a2b861416</span>
<span class="c" style="left:696px;top:868px;letter-spacing:0.085px">INSERT</span>
<div style="left:7px;top:886px;width:947px;height:1px;background:#7a8a99"></div>
<div style="left:7px;top:887px;width:947px;height:24px;background:#e8eef7"></div>
<span class="k" style="left:7.6px;top:890px;letter-spacing:0.03px">0.02%</span>
<span class="k" style="left:449px;top:890px;letter-spacing:0.2px">b29c28642ac6b</span>
<span class="c" style="left:696px;top:893px;letter-spacing:-0.292px">AUTOVACUUM</span>
<div style="left:7px;top:911px;width:947px;height:1px;background:#7a8a99"></div>
<div style="left:435px;top:432px;width:1px;height:480px;background:#7a8a99"></div>
<div style="left:694px;top:432px;width:1px;height:480px;background:#7a8a99"></div>
<div style="left:953px;top:432px;width:1px;height:480px;background:#7a8a99"></div>
<div style="left:959px;top:406px;width:9px;height:612px;background:#eee"></div>
<svg style="left:960px;top:406px" width="8" height="612" viewBox="960 406 8 612"><defs><pattern id="dots2" x="962" y="407" width="4" height="4" patternUnits="userSpaceOnUse"><rect x="0" y="1" width="1" height="1" fill="#fff"/><rect x="1" y="2" width="1" height="1" fill="#7a8a99"/><rect x="2" y="3" width="1" height="1" fill="#fff"/><rect x="3" y="0" width="1" height="1" fill="#7a8a99"/></pattern></defs><rect x="962" y="407" width="4" height="609" fill="url(#dots2)"/><rect x="961" y="408" width="6" height="10" fill="#eee"/><rect x="961" y="420" width="4" height="10" fill="#eee"/><path d="M965.500 409L961.500 413L965.500 417z" fill="#6382bf"/><path d="M961.500 413L965.500 409" stroke="#222" fill="none"/><path d="M961.500 421v8l4-4z" fill="#6382bf"/><path d="M961.500 421v8" stroke="#222" fill="none"/></svg>
<div style="left:968px;top:404px;width:946px;height:612px;background:#fff;border:2px solid #7a8a99;border-top-width:3px;border-right-width:1px;border-bottom-width:1px"></div>
<div class="th" style="left:970px;top:407px;width:303px;height:29px"></div>
<div class="th" style="left:1274px;top:407px;width:133px;height:29px"></div>
<div class="th" style="left:1408px;top:407px;width:132px;height:29px"></div>
<div class="th" style="left:1541px;top:407px;width:178px;height:29px"></div>
<div class="th" style="left:1720px;top:407px;width:177px;height:29px"></div>
<div class="th" style="left:1898px;top:407px;width:15px;height:29px"></div>
<div style="left:970px;top:436px;width:928px;height:1px;background:#7a8a99"></div>
<span class="c" style="left:1098.97px;top:416px;letter-spacing:-0.411px">Activity %</span>
<span class="c" style="left:1331.5px;top:416px;letter-spacing:0.063px">PID</span>
<span class="c" style="left:1442.52px;top:416px;letter-spacing:0.444px">User Name</span>
<span class="c" style="left:1606.55px;top:416px;letter-spacing:0.417px">Program</span>
<span class="c" style="left:1771.55px;top:416px;letter-spacing:0.109px">Backend Type</span>
<div style="left:970px;top:436px;width:928px;height:579px;overflow:hidden">
<i class="bar" style="left:0px;top:2px;width:109px;background:#004ae7"></i>
<i class="bar" style="left:109px;top:2px;width:63px;background:#00cc00"></i>
<i class="bar" style="left:172px;top:2px;width:12px;background:#9f9371"></i>
<i class="bar" style="left:184px;top:2px;width:12px;background:#8b1a00"></i>
<i class="bar" style="left:196px;top:2px;width:10px;background:#c02800"></i>
<span class="k" style="left:206.6px;top:4px;letter-spacing:0.03px">44.03%</span>
<span class="c" style="left:305.3px;top:7px;letter-spacing:0.2px">10056</span>
<span class="c" style="left:439px;top:7px;letter-spacing:0.27px">postgres</span>
<span class="c" style="left:571.5px;top:7px;letter-spacing:0.141px">pgbench@::1/128</span>
<span class="c" style="left:751px;top:7px;letter-spacing:0.202px">client backend</span>
<div style="left:0px;top:25px;width:928px;height:1px;background:#7a8a99"></div>
<div style="left:0px;top:26px;width:928px;height:24px;background:#e8eef7"></div>
<i class="bar" style="left:0px;top:27px;width:18px;background:#8b1a00"></i>
<i class="bar" style="left:18px;top:27px;width:15px;background:#00cc00"></i>
<i class="bar" style="left:33px;top:27px;width:15px;background:#c02800"></i>
<i class="bar" style="left:48px;top:27px;width:12px;background:#004ae7"></i>
<i class="bar" style="left:60px;top:27px;width:6px;background:#9f9371"></i>
<span class="k" style="left:66.6px;top:29px;letter-spacing:0.03px">8.41%</span>
<span class="c" style="left:305.3px;top:32px;letter-spacing:0.2px">9836</span>
<span class="c" style="left:439px;top:32px;letter-spacing:0.27px">postgres</span>
<span class="c" style="left:571.5px;top:32px;letter-spacing:0.141px">pgbench@::1/128</span>
<span class="c" style="left:751px;top:32px;letter-spacing:0.202px">client backend</span>
<div style="left:0px;top:50px;width:928px;height:1px;background:#7a8a99"></div>
<i class="bar" style="left:0px;top:52px;width:15px;background:#8b1a00"></i>
<i class="bar" style="left:15px;top:52px;width:15px;background:#c02800"></i>
<i class="bar" style="left:30px;top:52px;width:12px;background:#00cc00"></i>
<i class="bar" style="left:42px;top:52px;width:12px;background:#004ae7"></i>
<i class="bar" style="left:54px;top:52px;width:3px;background:#9f9371"></i>
<span class="k" style="left:57.6px;top:54px;letter-spacing:0.03px">8.15%</span>
<span class="c" style="left:305.3px;top:57px;letter-spacing:0.2px">7360</span>
<span class="c" style="left:439px;top:57px;letter-spacing:0.27px">postgres</span>
<span class="c" style="left:571.5px;top:57px;letter-spacing:0.141px">pgbench@::1/128</span>
<span class="c" style="left:751px;top:57px;letter-spacing:0.202px">client backend</span>
<div style="left:0px;top:75px;width:928px;height:1px;background:#7a8a99"></div>
<div style="left:0px;top:76px;width:928px;height:24px;background:#e8eef7"></div>
<i class="bar" style="left:0px;top:77px;width:18px;background:#8b1a00"></i>
<i class="bar" style="left:18px;top:77px;width:15px;background:#c02800"></i>
<i class="bar" style="left:33px;top:77px;width:12px;background:#00cc00"></i>
<i class="bar" style="left:45px;top:77px;width:12px;background:#004ae7"></i>
<span class="k" style="left:57.6px;top:79px;letter-spacing:0.03px">7.95%</span>
<span class="c" style="left:305.3px;top:82px;letter-spacing:0.2px">9728</span>
<span class="c" style="left:439px;top:82px;letter-spacing:0.27px">postgres</span>
<span class="c" style="left:571.5px;top:82px;letter-spacing:0.141px">pgbench@::1/128</span>
<span class="c" style="left:751px;top:82px;letter-spacing:0.202px">client backend</span>
<div style="left:0px;top:100px;width:928px;height:1px;background:#7a8a99"></div>
<i class="bar" style="left:0px;top:102px;width:18px;background:#8b1a00"></i>
<i class="bar" style="left:18px;top:102px;width:15px;background:#c02800"></i>
<i class="bar" style="left:33px;top:102px;width:12px;background:#00cc00"></i>
<i class="bar" style="left:45px;top:102px;width:12px;background:#004ae7"></i>
<span class="k" style="left:57.6px;top:104px;letter-spacing:0.03px">7.9%</span>
<span class="c" style="left:305.3px;top:107px;letter-spacing:0.2px">2384</span>
<span class="c" style="left:439px;top:107px;letter-spacing:0.27px">postgres</span>
<span class="c" style="left:571.5px;top:107px;letter-spacing:0.141px">pgbench@::1/128</span>
<span class="c" style="left:751px;top:107px;letter-spacing:0.202px">client backend</span>
<div style="left:0px;top:125px;width:928px;height:1px;background:#7a8a99"></div>
<div style="left:0px;top:126px;width:928px;height:24px;background:#e8eef7"></div>
<i class="bar" style="left:0px;top:127px;width:39px;background:#00cc00"></i>
<i class="bar" style="left:39px;top:127px;width:15px;background:#9f9371"></i>
<span class="k" style="left:54.6px;top:129px;letter-spacing:0.03px">6.95%</span>
<span class="c" style="left:305.3px;top:132px;letter-spacing:0.2px">2860</span>
<span class="c" style="left:439px;top:132px;letter-spacing:0.27px">postgres</span>
<span class="c" style="left:571.5px;top:132px;letter-spacing:0.141px">pgbench@::1/128</span>
<span class="c" style="left:751px;top:132px;letter-spacing:0.202px">client backend</span>
<div style="left:0px;top:150px;width:928px;height:1px;background:#7a8a99"></div>
<i class="bar" style="left:0px;top:152px;width:39px;background:#00cc00"></i>
<i class="bar" style="left:39px;top:152px;width:15px;background:#9f9371"></i>
<span class="k" style="left:54.6px;top:154px;letter-spacing:0.03px">6.79%</span>
<span class="c" style="left:305.3px;top:157px;letter-spacing:0.2px">11696</span>
<span class="c" style="left:439px;top:157px;letter-spacing:0.27px">postgres</span>
<span class="c" style="left:571.5px;top:157px;letter-spacing:0.141px">pgbench@::1/128</span>
<span class="c" style="left:751px;top:157px;letter-spacing:0.202px">client backend</span>
<div style="left:0px;top:175px;width:928px;height:1px;background:#7a8a99"></div>
<div style="left:0px;top:176px;width:928px;height:24px;background:#e8eef7"></div>
<i class="bar" style="left:0px;top:177px;width:36px;background:#004ae7"></i>
<i class="bar" style="left:36px;top:177px;width:6px;background:#00cc00"></i>
<span class="k" style="left:42.6px;top:179px;letter-spacing:0.03px">5.14%</span>
<span class="c" style="left:305.3px;top:182px;letter-spacing:0.2px">9040</span>
<span class="c" style="left:439px;top:182px;letter-spacing:0.27px">postgres</span>
<span class="c" style="left:571.5px;top:182px;letter-spacing:0.141px">pgbench@::1/128</span>
<span class="c" style="left:751px;top:182px;letter-spacing:0.202px">client backend</span>
<div style="left:0px;top:200px;width:928px;height:1px;background:#7a8a99"></div>
<i class="bar" style="left:0px;top:202px;width:9px;background:#004ae7"></i>
<i class="bar" style="left:9px;top:202px;width:3px;background:#00cc00"></i>
<i class="bar" style="left:12px;top:202px;width:3px;background:#c02800"></i>
<span class="k" style="left:15.6px;top:204px;letter-spacing:0.03px">1.66%</span>
<span class="c" style="left:305.3px;top:207px;letter-spacing:0.2px">7212</span>
<span class="c" style="left:439px;top:207px;letter-spacing:0.27px">postgres</span>
<span class="c" style="left:571.5px;top:207px;letter-spacing:0.141px">pgbench@::1/128</span>
<span class="c" style="left:751px;top:207px;letter-spacing:0.202px">client backend</span>
<div style="left:0px;top:225px;width:928px;height:1px;background:#7a8a99"></div>
<div style="left:0px;top:226px;width:928px;height:24px;background:#e8eef7"></div>
<span class="k" style="left:0.6px;top:229px;letter-spacing:0.03px">0.34%</span>
<span class="c" style="left:305.3px;top:232px;letter-spacing:0.2px">7024</span>
<span class="c" style="left:571.5px;top:232px;letter-spacing:0.089px">@localhost</span>
<span class="c" style="left:751px;top:232px;letter-spacing:0.125px">autovacuum worker</span>
<div style="left:0px;top:250px;width:928px;height:1px;background:#7a8a99"></div>
<span class="k" style="left:0.6px;top:254px;letter-spacing:0.03px">0.28%</span>
<span class="c" style="left:305.3px;top:257px;letter-spacing:0.2px">3432</span>
<span class="c" style="left:571.5px;top:257px;letter-spacing:0.089px">@localhost</span>
<span class="c" style="left:751px;top:257px;letter-spacing:0.125px">autovacuum worker</span>
<div style="left:0px;top:275px;width:928px;height:1px;background:#7a8a99"></div>
<div style="left:0px;top:276px;width:928px;height:24px;background:#e8eef7"></div>
<span class="k" style="left:0.6px;top:279px;letter-spacing:0.03px">0.27%</span>
<span class="c" style="left:305.3px;top:282px;letter-spacing:0.2px">8468</span>
<span class="c" style="left:571.5px;top:282px;letter-spacing:0.089px">@localhost</span>
<span class="c" style="left:751px;top:282px;letter-spacing:0.125px">autovacuum worker</span>
<div style="left:0px;top:300px;width:928px;height:1px;background:#7a8a99"></div>
<span class="k" style="left:0.6px;top:304px;letter-spacing:0.03px">0.25%</span>
<span class="c" style="left:305.3px;top:307px;letter-spacing:0.2px">9992</span>
<span class="c" style="left:571.5px;top:307px;letter-spacing:0.089px">@localhost</span>
<span class="c" style="left:751px;top:307px;letter-spacing:0.125px">autovacuum worker</span>
<div style="left:0px;top:325px;width:928px;height:1px;background:#7a8a99"></div>
<div style="left:0px;top:326px;width:928px;height:24px;background:#e8eef7"></div>
<span class="k" style="left:0.6px;top:329px;letter-spacing:0.03px">0.23%</span>
<span class="c" style="left:305.3px;top:332px;letter-spacing:0.2px">8780</span>
<span class="c" style="left:571.5px;top:332px;letter-spacing:0.089px">@localhost</span>
<span class="c" style="left:751px;top:332px;letter-spacing:0.125px">autovacuum worker</span>
<div style="left:0px;top:350px;width:928px;height:1px;background:#7a8a99"></div>
<span class="k" style="left:0.6px;top:354px;letter-spacing:0.03px">0.16%</span>
<span class="c" style="left:305.3px;top:357px;letter-spacing:0.2px">8264</span>
<span class="c" style="left:571.5px;top:357px;letter-spacing:0.089px">@localhost</span>
<span class="c" style="left:751px;top:357px;letter-spacing:0.125px">autovacuum worker</span>
<div style="left:0px;top:375px;width:928px;height:1px;background:#7a8a99"></div>
<div style="left:0px;top:376px;width:928px;height:24px;background:#e8eef7"></div>
<span class="k" style="left:0.6px;top:379px;letter-spacing:0.03px">0.16%</span>
<span class="c" style="left:305.3px;top:382px;letter-spacing:0.2px">9968</span>
<span class="c" style="left:439px;top:382px;letter-spacing:0.27px">postgres</span>
<span class="c" style="left:571.5px;top:382px;letter-spacing:0.141px">pgbench@::1/128</span>
<span class="c" style="left:751px;top:382px;letter-spacing:0.202px">client backend</span>
<div style="left:0px;top:400px;width:928px;height:1px;background:#7a8a99"></div>
<span class="k" style="left:0.6px;top:404px;letter-spacing:0.03px">0.14%</span>
<span class="c" style="left:305.3px;top:407px;letter-spacing:0.2px">11304</span>
<span class="c" style="left:571.5px;top:407px;letter-spacing:0.089px">@localhost</span>
<span class="c" style="left:751px;top:407px;letter-spacing:0.125px">autovacuum worker</span>
<div style="left:0px;top:425px;width:928px;height:1px;background:#7a8a99"></div>
<div style="left:0px;top:426px;width:928px;height:24px;background:#e8eef7"></div>
<span class="k" style="left:0.6px;top:429px;letter-spacing:0.03px">0.11%</span>
<span class="c" style="left:305.3px;top:432px;letter-spacing:0.2px">3100</span>
<span class="c" style="left:571.5px;top:432px;letter-spacing:0.089px">@localhost</span>
<span class="c" style="left:751px;top:432px;letter-spacing:0.125px">autovacuum worker</span>
<div style="left:0px;top:450px;width:928px;height:1px;background:#7a8a99"></div>
<span class="k" style="left:0.6px;top:454px;letter-spacing:0.03px">0.07%</span>
<span class="c" style="left:305.3px;top:457px;letter-spacing:0.2px">10124</span>
<span class="c" style="left:571.5px;top:457px;letter-spacing:0.089px">@localhost</span>
<span class="c" style="left:751px;top:457px;letter-spacing:0.125px">autovacuum worker</span>
<div style="left:0px;top:475px;width:928px;height:1px;background:#7a8a99"></div>
<div style="left:0px;top:476px;width:928px;height:24px;background:#e8eef7"></div>
<span class="k" style="left:0.6px;top:479px;letter-spacing:0.03px">0.07%</span>
<span class="c" style="left:305.3px;top:482px;letter-spacing:0.2px">5376</span>
<span class="c" style="left:571.5px;top:482px;letter-spacing:0.089px">@localhost</span>
<span class="c" style="left:751px;top:482px;letter-spacing:0.125px">autovacuum worker</span>
<div style="left:0px;top:500px;width:928px;height:1px;background:#7a8a99"></div>
<span class="k" style="left:0.6px;top:504px;letter-spacing:0.03px">0.07%</span>
<span class="c" style="left:305.3px;top:507px;letter-spacing:0.2px">9200</span>
<span class="c" style="left:571.5px;top:507px;letter-spacing:0.089px">@localhost</span>
<span class="c" style="left:751px;top:507px;letter-spacing:0.125px">autovacuum worker</span>
<div style="left:0px;top:525px;width:928px;height:1px;background:#7a8a99"></div>
<div style="left:0px;top:526px;width:928px;height:24px;background:#e8eef7"></div>
<span class="k" style="left:0.6px;top:529px;letter-spacing:0.03px">0.07%</span>
<span class="c" style="left:305.3px;top:532px;letter-spacing:0.2px">9228</span>
<span class="c" style="left:571.5px;top:532px;letter-spacing:0.089px">@localhost</span>
<span class="c" style="left:751px;top:532px;letter-spacing:0.125px">autovacuum worker</span>
<div style="left:0px;top:550px;width:928px;height:1px;background:#7a8a99"></div>
<span class="k" style="left:0.6px;top:554px;letter-spacing:0.03px">0.05%</span>
<span class="c" style="left:305.3px;top:557px;letter-spacing:0.2px">5236</span>
<span class="c" style="left:571.5px;top:557px;letter-spacing:0.089px">@localhost</span>
<span class="c" style="left:751px;top:557px;letter-spacing:0.125px">autovacuum worker</span>
<div style="left:0px;top:575px;width:928px;height:1px;background:#7a8a99"></div>
<div style="left:0px;top:576px;width:928px;height:24px;background:#e8eef7"></div>
<div style="left:0px;top:600px;width:928px;height:1px;background:#7a8a99"></div>
<div style="left:303px;top:0px;width:1px;height:582px;background:#7a8a99"></div>
<div style="left:437px;top:0px;width:1px;height:582px;background:#7a8a99"></div>
<div style="left:570px;top:0px;width:1px;height:582px;background:#7a8a99"></div>
<div style="left:749px;top:0px;width:1px;height:582px;background:#7a8a99"></div>
</div>
<div style="left:1273px;top:406px;width:1px;height:30px;background:#7a8a99"></div>
<div style="left:1407px;top:406px;width:1px;height:30px;background:#7a8a99"></div>
<div style="left:1540px;top:406px;width:1px;height:30px;background:#7a8a99"></div>
<div style="left:1719px;top:406px;width:1px;height:30px;background:#7a8a99"></div>
<div style="left:1897px;top:406px;width:1px;height:30px;background:#7a8a99"></div>
<div style="left:1897px;top:436px;width:1px;height:579px;background:#7a8a99"></div>
<div style="left:1898px;top:437px;width:15px;height:578px;background:#eee;border-left:1px solid #7a8a99"></div>
<div style="left:1899px;top:437px;width:1px;height:578px;background:#dfeaf6"></div>
<div style="left:1899px;top:437px;width:14px;height:14px;background:#eee;box-shadow:inset 1px 1px 0 #fff"></div>
<svg style="left:1898px;top:437px" width="15" height="15" viewBox="1898 437 15 15"><path d="M1902 446L1906.500 441.500L1911 446z" fill="#333"/></svg>
<div style="left:1898px;top:452px;width:15px;height:263px;background:linear-gradient(90deg,#c8dcf0 0%,#fff 32%,#d6e5f4 62%,#bdd4ea 100%);border:1px solid #6382bf;border-right:none"></div>
<svg style="left:1898px;top:578px" width="15" height="10" viewBox="1898 578 15 10"><path d="M1903 582.500h9M1903 584.500h9M1903 586.500h9" stroke="#fff" fill="none"/><path d="M1902 581.500h9M1902 583.500h9M1902 585.500h9" stroke="#6382bf" fill="none"/></svg>
<div style="left:1899px;top:999px;width:14px;height:16px;background:#eee;border-top:1px solid #7a8a99;border-bottom:1px solid #7a8a99;box-shadow:inset 1px 1px 0 #fff"></div>
<svg style="left:1898px;top:1000px" width="15" height="15" viewBox="1898 1000 15 15"><path d="M1902 1006h9l-4.500 4.500z" fill="#333"/></svg>
<div style="left:0px;top:397px;width:1px;height:624px;background:#6382bf"></div>
<div style="left:1px;top:397px;width:1px;height:624px;background:#c8ddf2"></div>
<div style="left:1917px;top:102px;width:2px;height:919px;background:#c8ddf2"></div>
<div style="left:1919px;top:101px;width:1px;height:921px;background:#7a8a99"></div>
<div style="left:1px;top:1019px;width:1918px;height:2px;background:#c8ddf2"></div>
<div style="left:0px;top:1021px;width:1920px;height:1px;background:#75808c"></div>
<div style="left:0px;top:1022px;width:1920px;height:18px;background:#eee;border-top:1px solid #8a8a8a;border-left:1px solid #8a8a8a;border-bottom:1px solid #8a8a8a;box-shadow:inset 1px 1px 0 #f6f6f6"></div>
<span class="b" style="left:4px;top:1025px;letter-spacing:-0.16px;white-space:pre">Top Activity   Selection: Manual   Range: 14:27:28 --- 15:30:41</span>
</body></html>
